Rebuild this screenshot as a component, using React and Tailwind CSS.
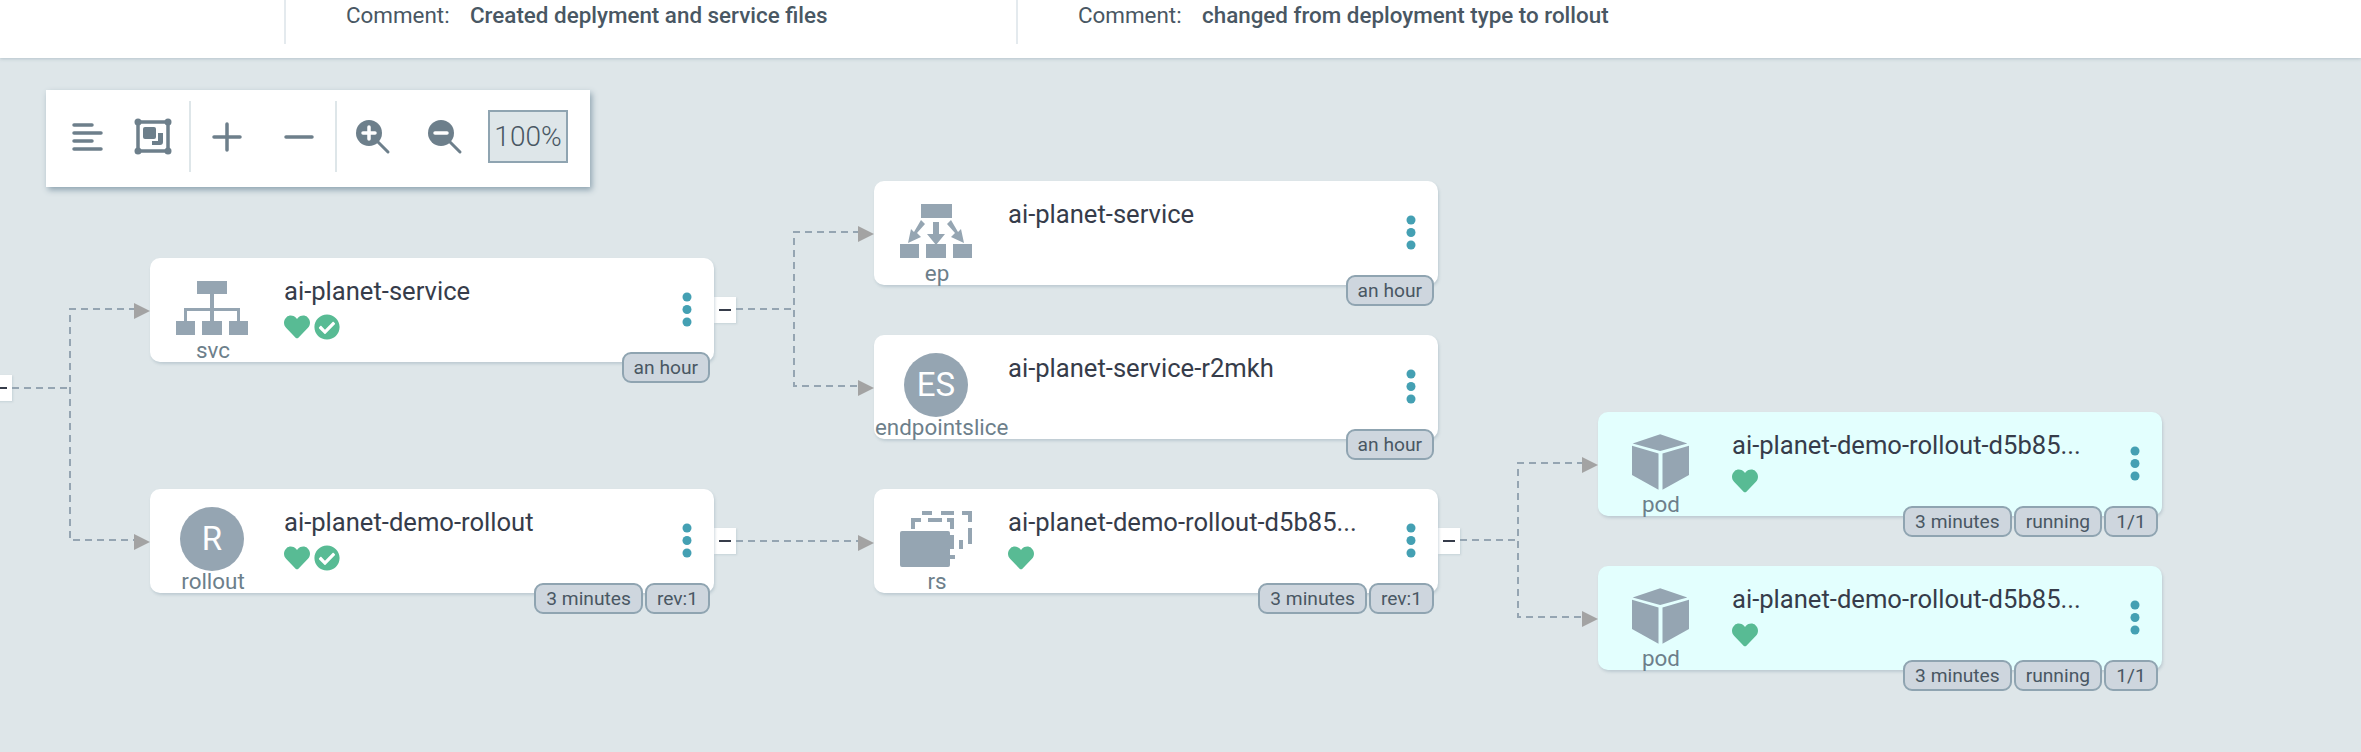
import { FaHeart, FaCheckCircle } from "react-icons/fa";

const SvcIcon = () => (
  <svg viewBox="0 0 72 54" className="h-[54px] w-[72px] fill-[#95a5b2]">
    <rect x="21" y="0" width="30" height="13" />
    <rect x="34" y="13" width="4" height="27" />
    <path d="M8 40V27h56v13h-3V30H11v10z" />
    <rect x="0" y="40" width="19" height="14" />
    <rect x="26" y="40" width="20" height="14" />
    <rect x="53" y="40" width="19" height="14" />
  </svg>
);

const EpIcon = () => (
  <svg viewBox="0 0 72 54" className="h-[54px] w-[72px] fill-[#95a5b2]">
    <rect x="21" y="0" width="31" height="14" />
    <path d="M33 18h6v12h6l-9 11-9-11h6z" />
    <path d="M21 16l4 4-8 9 4 4-13 6 3-14 3 3z" />
    <path d="M51 16l-4 4 8 9-4 4 13 6-3-14-3 3z" />
    <rect x="0" y="40" width="19" height="14" />
    <rect x="26" y="40" width="20" height="14" />
    <rect x="53" y="40" width="19" height="14" />
  </svg>
);

const RsIcon = () => (
  <svg viewBox="0 0 72 56" className="h-[56px] w-[72px] fill-[#95a5b2]">
    <rect x="0" y="20" width="50" height="36" rx="2" />
    <path d="M22 0h10v4H22zM41 0h13v4H41zM62 0h10v11h-4V4h-6zM68 17h4v16h-4zM63 38h-4v-9h4z" />
    <path d="M11 7h10v4H15v7h-4zM28 7h14v4H28zM47 7h7v11h-4v-7h-3zM50 24h4v14h-4zM50 44h5v4h-5z" />
  </svg>
);

const PodIcon = () => (
  <svg viewBox="95 57 172 168" className="h-[56px] w-[57px] fill-[#95a5b2]">
    <path d="M180 57l82 28-82 23-83-23z" />
    <path d="M95 92l80 23v110l-80-45z" />
    <path d="M187 115l80-23v88l-80 45z" />
  </svg>
);

const Letter = ({ text }) => (
  <div className="flex h-16 w-16 items-center justify-center rounded-full bg-[#95a5b2] text-[33px] text-white">
    {text}
  </div>
);

const Dots = () => (
  <svg viewBox="0 0 10 35" className="h-[35px] w-[10px] fill-[#44a0b3]">
    <circle cx="5" cy="5" r="4.5" />
    <circle cx="5" cy="17.5" r="4.5" />
    <circle cx="5" cy="30" r="4.5" />
  </svg>
);

const Collapse = ({ className }) => (
  <div
    className={`absolute flex h-[26px] w-[22px] items-center justify-center bg-white shadow-[1px_1px_2px_rgba(143,164,177,0.3)] ${className}`}
  >
    <div className="h-[2px] w-3 bg-[#363c4a]" />
  </div>
);

const Tag = ({ text }) => (
  <div className="flex h-[31px] min-w-[54px] items-center justify-center rounded-[9px] border-2 border-[#8fa4b1] bg-[#ced6de] px-[10px] text-[19.2px] leading-none text-[#495763]">
    {text}
  </div>
);

const Node = ({ pos, bg, icon, label, title, heart, check, tags, iconTop }) => (
  <div
    className={`absolute h-[104px] w-[564px] rounded-[10px] shadow-[1px_2px_3px_rgba(143,164,177,0.4)] ${pos} ${bg}`}
  >
    <div className={`absolute left-0 flex w-[124px] justify-center ${iconTop}`}>{icon}</div>
    <div className="absolute left-px top-[79px] w-[124px] text-center text-[22.4px] leading-[26px] text-[#6d7f8b]">
      {label}
    </div>
    <div className="absolute left-[134px] top-[17px] text-[25.6px] leading-8 text-[#363c4a]">{title}</div>
    <div className="absolute left-[134px] top-[56px] flex h-[26px] items-center gap-1 text-[#58bb94]">
      {heart && <FaHeart size={26} />}
      {check && <FaCheckCircle size={26} />}
    </div>
    <div className="absolute right-[22px] top-[34px]">
      <Dots />
    </div>
    {tags && (
      <div className="absolute right-1 top-[94px] flex gap-[2px]">
        {tags.map((t) => (
          <Tag key={t} text={t} />
        ))}
      </div>
    )}
  </div>
);

const Arrow = ({ x, y }) => <polygon points={`${x},${y - 8} ${x + 16},${y} ${x},${y + 8}`} fill="#a3a3a3" />;

const Edges = () => (
  <svg viewBox="0 0 2361 752" className="absolute inset-0 h-[752px] w-[2361px]">
    <g fill="none" stroke="#95a5b2" strokeWidth="2" strokeDasharray="7 5">
      <path d="M12 388H70" />
      <path d="M136 309H70V540H136" />
      <path d="M736 309H794" />
      <path d="M860 232H794V386H860" />
      <path d="M736 541H860" />
      <path d="M1460 540H1518" />
      <path d="M1584 463H1518V617H1584" />
    </g>
    <Arrow x={134} y={311} />
    <Arrow x={134} y={542} />
    <Arrow x={858} y={234} />
    <Arrow x={858} y={388} />
    <Arrow x={858} y={543} />
    <Arrow x={1582} y={465} />
    <Arrow x={1582} y={619} />
  </svg>
);

const ToolIcon = ({ children }) => (
  <svg viewBox="0 0 40 40" className="h-10 w-10 fill-[#6d7f8b] stroke-[#6d7f8b]">
    {children}
  </svg>
);

const Toolbar = () => (
  <div className="ml-[46px] mt-8 flex h-[97px] w-[544px] items-center bg-white pb-1 shadow-[2px_3px_6px_#8fa4b1]">
    <div className="flex w-[143px] items-center justify-between pl-[22px] pr-[16px]">
      <ToolIcon>
        <g strokeWidth="3.5" strokeLinecap="round" fill="none">
          <path d="M6 8H24" />
          <path d="M6 16H33" />
          <path d="M6 24H24" />
          <path d="M6 32H33" />
        </g>
      </ToolIcon>
      <ToolIcon>
        <rect x="5" y="5" width="30" height="29" fill="none" strokeWidth="3.5" />
        <g stroke="none">
          <circle cx="5" cy="5" r="3.5" />
          <circle cx="35" cy="5" r="3.5" />
          <circle cx="5" cy="34" r="3.5" />
          <circle cx="35" cy="34" r="3.5" />
          <rect x="10" y="10" width="13" height="12" rx="2" />
          <path d="M25 16h5v9a3 3 0 0 1-3 3h-8v-4h6z" />
        </g>
      </ToolIcon>
    </div>
    <div className="h-[71px] w-[2px] bg-[#dee6e9]" />
    <div className="flex w-[144px] items-center gap-8 pl-4">
      <ToolIcon>
        <path d="M20 7V33M7 20H33" strokeWidth="3.5" strokeLinecap="round" fill="none" />
      </ToolIcon>
      <ToolIcon>
        <path d="M7 20H33" strokeWidth="3.5" strokeLinecap="round" fill="none" />
      </ToolIcon>
    </div>
    <div className="h-[71px] w-[2px] bg-[#dee6e9]" />
    <div className="flex flex-1 items-center pl-[15px]">
      <ToolIcon>
        <circle cx="17" cy="16" r="13" stroke="none" />
        <path d="M26 25L36 35" strokeWidth="3" strokeLinecap="round" fill="none" />
        <path d="M17 10V22M11 16H23" stroke="#fff" strokeWidth="3.5" strokeLinecap="round" />
      </ToolIcon>
      <div className="ml-8">
        <ToolIcon>
          <circle cx="17" cy="16" r="13" stroke="none" />
          <path d="M26 25L36 35" strokeWidth="3" strokeLinecap="round" fill="none" />
          <path d="M11 16H23" stroke="#fff" strokeWidth="3.5" strokeLinecap="round" />
        </ToolIcon>
      </div>
      <div className="ml-6 flex h-[53px] w-20 items-center justify-center border-2 border-[#8fa4b1] bg-[#dee6e9] text-[28px] font-light text-[#495763]">
        100%
      </div>
    </div>
  </div>
);

const Comment = ({ value, className }) => (
  <div className={`flex h-11 items-start border-l-2 border-[#e4eaee] pl-[60px] text-[22.4px] leading-[30px] text-[#495763] ${className}`}>
    <span className="w-[124px]">Comment:</span>
    <span className="font-medium">{value}</span>
  </div>
);

const rolloutName = "ai-planet-demo-rollout-d5b85...";
const podTags = ["3 minutes", "running", "1/1"];

const App = () => {
  return (
    <div className="relative h-[752px] w-[2361px] overflow-hidden bg-[#dee6e9] font-['Roboto',sans-serif]">
      <div className="relative z-10 flex h-[58px] bg-white pl-[284px] shadow-[0_1px_3px_rgba(143,164,177,0.5)]">
        <Comment value="Created deplyment and service files" className="w-[732px]" />
        <Comment value="changed from deployment type to rollout" />
      </div>
      <Toolbar />

      <Edges />
      <Collapse className="left-[-10px] top-[375px]" />
      <Collapse className="left-[714px] top-[297px]" />
      <Collapse className="left-[714px] top-[528px]" />
      <Collapse className="left-[1438px] top-[528px]" />

      <Node
        pos="left-[150px] top-[258px]"
        bg="bg-white"
        iconTop="top-[23px]"
        icon={<SvcIcon />}
        label="svc"
        title="ai-planet-service"
        heart
        check
        tags={["an hour"]}
      />
      <Node
        pos="left-[150px] top-[489px]"
        bg="bg-white"
        iconTop="top-[18px]"
        icon={<Letter text="R" />}
        label="rollout"
        title="ai-planet-demo-rollout"
        heart
        check
        tags={["3 minutes", "rev:1"]}
      />
      <Node
        pos="left-[874px] top-[181px]"
        bg="bg-white"
        iconTop="top-[23px]"
        icon={<EpIcon />}
        label="ep"
        title="ai-planet-service"
        tags={["an hour"]}
      />
      <Node
        pos="left-[874px] top-[335px]"
        bg="bg-white"
        iconTop="top-[18px]"
        icon={<Letter text="ES" />}
        label="endpointslice"
        title="ai-planet-service-r2mkh"
        tags={["an hour"]}
      />
      <Node
        pos="left-[874px] top-[489px]"
        bg="bg-white"
        iconTop="top-[22px]"
        icon={<RsIcon />}
        label="rs"
        title={rolloutName}
        heart
        tags={["3 minutes", "rev:1"]}
      />
      <Node
        pos="left-[1598px] top-[412px]"
        bg="bg-[#e3fffe]"
        iconTop="top-[22px]"
        icon={<PodIcon />}
        label="pod"
        title={rolloutName}
        heart
        tags={podTags}
      />
      <Node
        pos="left-[1598px] top-[566px]"
        bg="bg-[#e3fffe]"
        iconTop="top-[22px]"
        icon={<PodIcon />}
        label="pod"
        title={rolloutName}
        heart
        tags={podTags}
      />
    </div>
  );
};
export default App;
